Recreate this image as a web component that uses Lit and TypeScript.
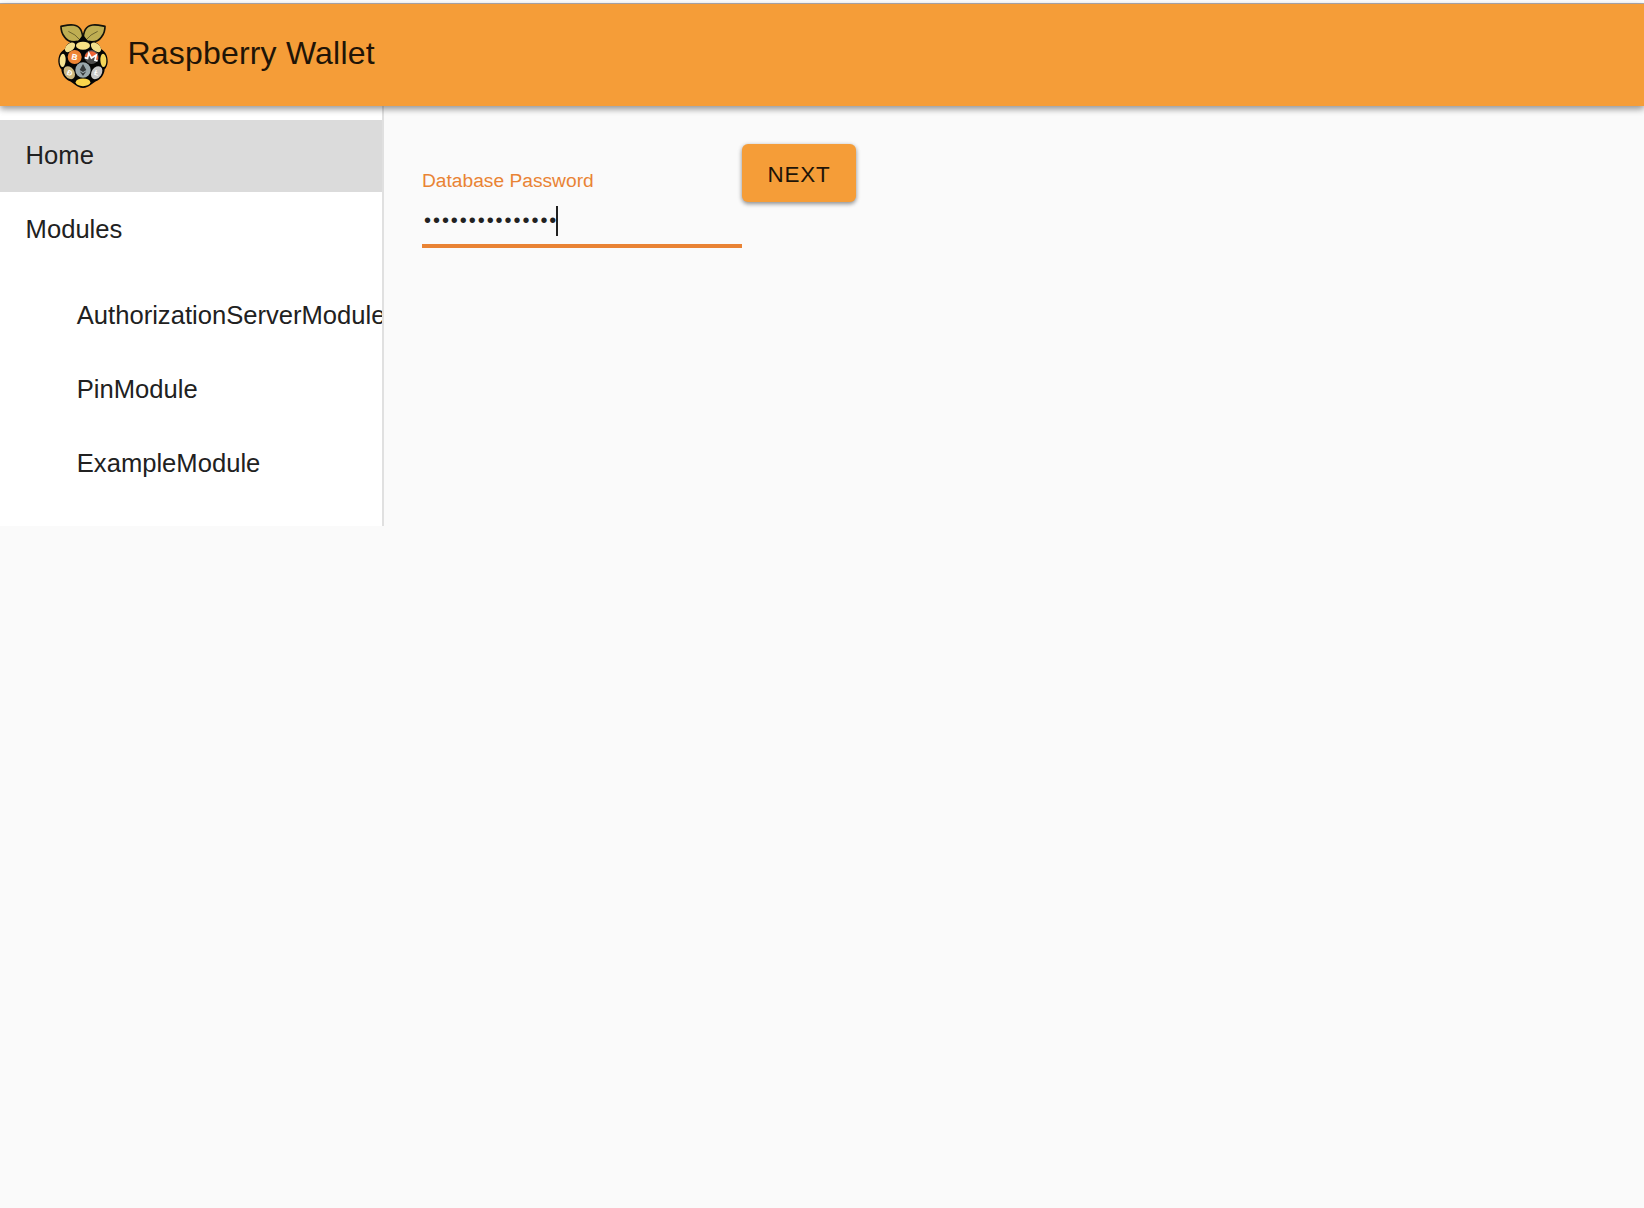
import { LitElement, html, css, svg } from "lit";
import { customElement, property } from "lit/decorators.js";

@customElement("wallet-logo")
class WalletLogo extends LitElement {
  static styles = css`
    :host { display: block; width: 66px; height: 76px; }
    .logo { display: block; width: 100%; height: 100%; }
    .coin { font: bold 25px "Liberation Sans", sans-serif; fill: #fff; text-anchor: middle; }
    .small { font-size: 22px; }
  `;
  render() {
    return html`<svg class="logo" viewBox="0 0 198 228">
      ${svg`
      <g stroke="#15130a" stroke-width="5" stroke-linejoin="round">
        <path fill="#bfae52" d="M98 74C99 50 94 30 70 27C56 25 44 29 33 31C33 44 36 54 43 62C51 74 64 80 82 77Z"/>
        <path fill="#bfae52" d="M100 74C99 50 104 30 128 27C142 25 154 29 165 31C165 44 162 54 155 62C147 74 134 80 116 77Z"/>
      </g>
      <path fill="none" stroke="#5d5424" stroke-width="2.5" d="M55 46Q76 54 92 74M143 46Q122 54 106 74"/>
      <path fill="#050505" d="M99 56L114 75C134 72 149 84 153 99C166 106 174 120 173 138C172 149 168 156 164 160C163 176 153 190 138 196C125 203 118 215 99 216C80 215 73 203 60 196C45 190 35 176 34 160C30 156 26 149 25 138C24 120 32 106 45 99C49 84 64 72 84 75Z"/>
      <ellipse cx="99" cy="89" rx="21" ry="12" fill="#f8e085"/>
      <ellipse cx="60" cy="94" rx="18" ry="11" transform="rotate(-42 60 94)" fill="#f2df8c"/>
      <ellipse cx="138" cy="94" rx="18" ry="11" transform="rotate(42 138 94)" fill="#f2df8c"/>
      <ellipse cx="38" cy="133" rx="9" ry="20" transform="rotate(3 38 133)" fill="#f7e493"/>
      <ellipse cx="160" cy="133" rx="9" ry="20" transform="rotate(-3 160 133)" fill="#f5d659"/>
      <ellipse cx="99" cy="199" rx="22" ry="11.5" fill="#fad54c"/>
      <circle cx="74" cy="123" r="21" fill="#ee8434"/>
      <text class="coin" x="74" y="132" transform="rotate(12 74 123)">B</text>
      <g transform="rotate(14 125 123)">
        <circle cx="125" cy="123" r="21" fill="#4d4d4d"/>
        <path fill="#ee6336" d="M104 127A21 21 0 1 1 146 127H137V112L125 124L113 112V127Z"/>
        <path fill="none" stroke="#fff" stroke-width="5" d="M105 130H114V114L125 126L137 114V130H145"/>
      </g>
      <circle cx="99" cy="162" r="23" fill="#9aa8ad"/>
      <path fill="#35393b" d="M99 144L109 162L99 168L89 162ZM89 166L99 172L109 166L99 180Z"/>
      <ellipse cx="58" cy="170" rx="15" ry="21" transform="rotate(-34 58 170)" fill="#cbb780"/>
      <text class="coin small" x="59" y="178" transform="rotate(24 58 170)">Ð</text>
      <ellipse cx="140" cy="170" rx="15" ry="21" transform="rotate(34 140 170)" fill="#c8c8c8"/>
      <text class="coin small" x="140" y="178" transform="rotate(18 140 170)">Ł</text>
      `}
    </svg>`;
  }
}

@customElement("nav-item")
class NavItem extends LitElement {
  @property() label = "";
  @property({ type: Boolean }) active = false;
  static styles = css`
    :host { display: block; margin-bottom: 2px; }
    .row {
      display: flex; align-items: center; box-sizing: border-box; height: 72px;
      padding: 0 0 2px 25.6px; font-size: 25.6px; white-space: nowrap; color: #212121;
    }
    .active { background: #dbdbdb; }
  `;
  render() {
    return html`<div class="row ${this.active ? "active" : ""}">${this.label}</div>`;
  }
}

@customElement("app-root")
class AppRoot extends LitElement {
  static styles = css`
    :host {
      display: flex; flex-direction: column; height: 1208px; overflow: hidden;
      background: #fafafa; font-family: "Liberation Sans", Arial, sans-serif; color: #212121;
    }
    .edge { flex: none; height: 3px; background: #fff; border-bottom: 1px solid #b3b0b5; }
    .header {
      flex: none; display: flex; align-items: flex-start; box-sizing: border-box; height: 102px;
      padding: 12px 0 0 50px; background: #f59d38; z-index: 1;
      box-shadow: 0 3px 6px rgba(0,0,0,.28), 0 2px 8px rgba(0,0,0,.2);
    }
    .title {
      margin: 0 0 0 11.4px; line-height: 74px; font-size: 32px; font-weight: 400;
      letter-spacing: .2px; color: #1f1407;
    }
    .body { display: flex; align-items: flex-start; }
    .sidebar {
      flex: none; box-sizing: border-box; width: 384px; height: 420px; padding-top: 14px;
      overflow: hidden; background: #fff; border-right: 2px solid #e0e0e0;
    }
    .sub { padding: 12px 0 0 51.2px; }
    .form { display: flex; align-items: flex-start; padding: 38px 0 0 38px; }
    .field {
      display: flex; flex-direction: column; box-sizing: border-box; width: 320px; height: 104px;
      padding-top: 26px; border-bottom: 4px solid #e98334;
    }
    .label { font-size: 19.2px; line-height: 22px; color: #e98334; }
    .value { display: flex; align-items: center; height: 30px; margin-top: 14px; }
    .dots { padding: 0 0 2px 2px; font-size: 20px; letter-spacing: 1.95px; line-height: 28px; }
    .caret { width: 2px; height: 30px; margin-left: -2px; background: #212121; }
    .next {
      box-sizing: border-box; width: 114px; height: 58px; padding: 3px 0 0; border: 0; border-radius: 6px;
      background: #f59d38; color: #1f1407; font: 22.4px "Liberation Sans", Arial, sans-serif;
      letter-spacing: .8px; box-shadow: 0 2px 4px rgba(0,0,0,.35), 0 1px 5px rgba(0,0,0,.15);
    }
  `;
  render() {
    return html`
      <div class="edge"></div>
      <header class="header">
        <wallet-logo></wallet-logo>
        <h1 class="title">Raspberry Wallet</h1>
      </header>
      <div class="body">
        <nav class="sidebar">
          <nav-item label="Home" active></nav-item>
          <nav-item label="Modules"></nav-item>
          <div class="sub">
            ${["AuthorizationServerModule", "PinModule", "ExampleModule"].map(
              (name) => html`<nav-item label=${name}></nav-item>`
            )}
          </div>
        </nav>
        <main class="form">
          <div class="field">
            <div class="label">Database Password</div>
            <div class="value"><span class="dots">${"•".repeat(15)}</span><span class="caret"></span></div>
          </div>
          <button class="next">NEXT</button>
        </main>
      </div>
    `;
  }
}
